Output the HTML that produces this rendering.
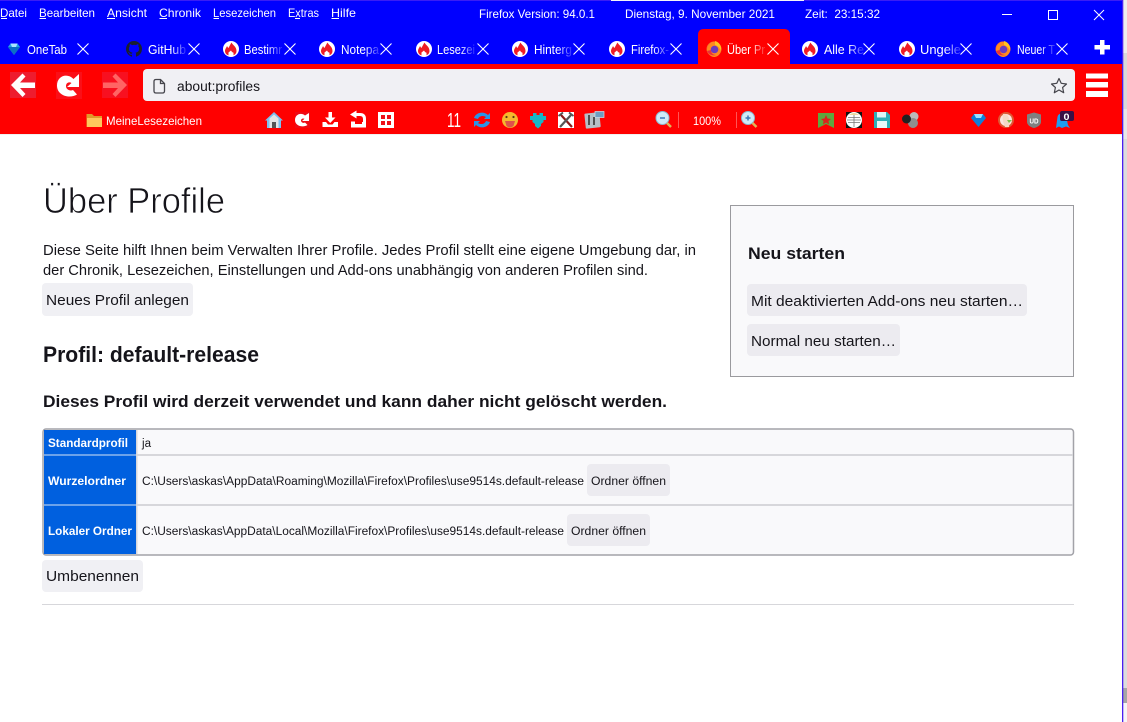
<!DOCTYPE html>
<html lang="de"><head><meta charset="utf-8"><title>Über Profile</title>
<style>
html,body{margin:0;padding:0;background:#fff;width:1127px;height:722px;overflow:hidden}
svg{display:block}
text{font-family:"Liberation Sans",sans-serif;white-space:pre}
.m{fill:#fff;font-size:12px}
.t{font-size:13px}
.c{fill:#15141a;font-size:15px}
.h{fill:#fff;font-size:11.5px;font-weight:bold}
.p{fill:#15141a;font-size:11.5px}
.x{stroke:#fff;stroke-width:1.1;fill:none}
</style></head><body>
<svg width="1127" height="722" viewBox="0 0 1127 722" xmlns="http://www.w3.org/2000/svg">
<defs>
<linearGradient id="f"><stop offset=".6" stop-color="#fff"/><stop offset="1" stop-color="#fff" stop-opacity=".15"/></linearGradient>
<g id="fire"><circle r="8" fill="#fff"/><path d="M.5-6.500C1.500-4 5.500-2.500 5.500 2 5.500 5 3 6.500 1 6.500L-1 6.500C-4 6.500-6 4.500-6 2-6 0-4.500-1.500-4-3-3.500-2-3-1.500-2.500-1-1.500-3-.5-5 .5-6.500Z" fill="#ee1c25"/><path d="M-2.500 6.500V3.500L0 1.500 1 3 2.500 3.800V6.500Z" fill="#fff"/></g>
<g id="ff"><circle r="7.500" fill="#f2692c"/><path d="M-7 1C-7-3-4-7 0-7.500 3-8 6-5 7-2 8 3 5 8 0 8-3 8-6 5-7 1Z" fill="#ff8a1f"/><path d="M1-8C5-7 8-3 7 2 6-1 4-3 1-4Z" fill="#ffc21f"/><circle cx=".5" cy=".5" r="3.800" fill="#6a3bc0"/><path d="M-7 2C-5 6-1 7 2 6-1 6-3 4-3 1Z" fill="#e8323c"/></g>
<path id="xx" class="x" d="M-5.500-5.500 5.500 5.500M5.500-5.500-5.500 5.500"/>
</defs>

<rect width="1127" height="722" fill="#fff"/>
<!-- right strip -->
<rect x="1123" y="0" width="4" height="53" fill="#eeeeee"/>
<rect x="1123" y="53" width="4" height="56" fill="#d9d9d9"/>
<rect x="1123" y="109" width="4" height="30" fill="#e8e8e8"/>
<rect x="1123" y="139" width="4" height="549" fill="#dcdcdc"/>
<rect x="1123" y="688" width="4" height="15" fill="#a6a6a6"/>
<rect x="1123" y="703" width="4" height="19" fill="#f6f6f6"/>
<rect x="1122" y="0" width="1.300" height="722" fill="#4a1ff0"/>

<!-- titlebar -->
<rect width="1122" height="64" fill="#0000ff"/>
<rect y="0" width="611" height="1" fill="#3a1cf5"/>
<rect x="611" y="0" width="193" height="1" fill="#f4f4fa"/>
<rect x="804" y="0" width="318" height="1" fill="#3a1cf5"/>
<text class="m" x="0" y="17" textLength="27" lengthAdjust="spacingAndGlyphs">Datei</text>
<text class="m" x="39" y="17" textLength="56" lengthAdjust="spacingAndGlyphs">Bearbeiten</text>
<text class="m" x="107" y="17" textLength="40" lengthAdjust="spacingAndGlyphs">Ansicht</text>
<text class="m" x="159" y="17" textLength="42" lengthAdjust="spacingAndGlyphs">Chronik</text>
<text class="m" x="213" y="17" textLength="63" lengthAdjust="spacingAndGlyphs">Lesezeichen</text>
<text class="m" x="288" y="17" textLength="31" lengthAdjust="spacingAndGlyphs">Extras</text>
<text class="m" x="331" y="17" textLength="25" lengthAdjust="spacingAndGlyphs">Hilfe</text>
<path d="M1 18.500H7M39.500 18.500H46M107 18.500H115M159.500 18.500H167M213.500 18.500H219M295 18.500H300M331.500 18.500H339" stroke="#fff" stroke-width="1"/>
<text class="m" x="479" y="18" textLength="116" lengthAdjust="spacingAndGlyphs">Firefox Version: 94.0.1</text>
<text class="m" x="625" y="18" textLength="150" lengthAdjust="spacingAndGlyphs">Dienstag, 9. November 2021</text>
<text class="m" x="805" y="18" textLength="75" lengthAdjust="spacingAndGlyphs">Zeit:  23:15:32</text>
<rect x="1002" y="14" width="10" height="1" fill="#fff"/>
<rect x="1048.500" y="10.500" width="9" height="9" fill="none" stroke="#fff"/>
<path d="M1094 10 1104 20M1104 10 1094 20" stroke="#fff" stroke-width="1"/>

<!-- tabs -->
<path d="M698 64V35Q698 29 704 29H784Q790 29 790 35V64Z" fill="#ff0000"/>
<g>
<path d="M14 55 8 47 10.500 43.500H17.500L20 47Z" fill="#1fa3e8"/><path d="M8 47H20L14 55Z" fill="#0b6fc4"/><path d="M10.500 43.500H17.500L16 47H12Z" fill="#a8e6ff"/>
<text class="t" x="27" y="54" textLength="40" lengthAdjust="spacingAndGlyphs" fill="#fff">OneTab</text>
<use href="#xx" x="83" y="49"/>

<path transform="translate(126 41)" fill="#1b1f2e" d="M8 0C3.58 0 0 3.58 0 8c0 3.54 2.29 6.53 5.47 7.59.4.07.55-.17.55-.38 0-.19-.01-.82-.01-1.49-2.01.37-2.53-.49-2.69-.94-.09-.23-.48-.94-.82-1.13-.28-.15-.68-.52-.01-.53.63-.01 1.08.58 1.23.82.72 1.21 1.87.87 2.33.66.07-.52.28-.87.51-1.07-1.78-.2-3.64-.89-3.64-3.95 0-.87.31-1.59.82-2.15-.08-.2-.36-1.02.08-2.12 0 0 .67-.21 2.2.82.64-.18 1.32-.27 2-.27.68 0 1.36.09 2 .27 1.53-1.04 2.2-.82 2.2-.82.44 1.1.16 1.92.08 2.12.51.56.82 1.27.82 2.15 0 3.07-1.87 3.75-3.65 3.95.29.25.54.73.54 1.48 0 1.07-.01 1.93-.01 2.2 0 .21.15.46.55.38A8.013 8.013 0 0016 8c0-4.42-3.58-8-8-8z"/>
<text class="t" x="148" y="54" textLength="38" lengthAdjust="spacingAndGlyphs" fill="url(#f)">GitHub</text>
<use href="#xx" x="194" y="49"/>

<use href="#fire" x="231" y="49"/>
<text class="t" x="244" y="54" textLength="38" lengthAdjust="spacingAndGlyphs" fill="url(#f)">Bestimr</text>
<use href="#xx" x="290" y="49"/>

<use href="#fire" x="327" y="49"/>
<text class="t" x="341" y="54" textLength="38" lengthAdjust="spacingAndGlyphs" fill="url(#f)">Notepa</text>
<use href="#xx" x="386" y="49"/>

<use href="#fire" x="424" y="49"/>
<text class="t" x="437" y="54" textLength="38" lengthAdjust="spacingAndGlyphs" fill="url(#f)">Lesezei</text>
<use href="#xx" x="483" y="49"/>

<use href="#fire" x="520" y="49"/>
<text class="t" x="534" y="54" textLength="38" lengthAdjust="spacingAndGlyphs" fill="url(#f)">Hinterg</text>
<use href="#xx" x="579" y="49"/>

<use href="#fire" x="617" y="49"/>
<text class="t" x="631" y="54" textLength="38" lengthAdjust="spacingAndGlyphs" fill="url(#f)">Firefox-</text>
<use href="#xx" x="676" y="49"/>

<use href="#ff" x="714" y="49"/>
<text class="t" x="727" y="54" textLength="38" lengthAdjust="spacingAndGlyphs" fill="url(#f)">Über Pr</text>
<use href="#xx" x="773" y="49"/>

<use href="#fire" x="810" y="49"/>
<text class="t" x="824" y="54" textLength="40" lengthAdjust="spacingAndGlyphs" fill="url(#f)">Alle Re</text>
<use href="#xx" x="869" y="49"/>

<use href="#fire" x="907" y="49"/>
<text class="t" x="920" y="54" textLength="41" lengthAdjust="spacingAndGlyphs" fill="url(#f)">Ungele</text>
<use href="#xx" x="966" y="49"/>

<use href="#ff" x="1003" y="49"/>
<text class="t" x="1017" y="54" textLength="38" lengthAdjust="spacingAndGlyphs" fill="url(#f)">Neuer T</text>
<use href="#xx" x="1062" y="49"/>
</g>
<path d="M1100 40H1104.500V45H1110V49.500H1104.500V54.500H1100V49.500H1094.500V45H1100Z" fill="#fff"/>

<!-- nav -->
<rect y="64" width="1122" height="70" fill="#ff0000"/>
<rect x="10" y="72" width="26" height="26" fill="#ee1c2e"/>
<path d="M11 85 22.500 73.500 25.500 76.500 20 82.500H35V88H20L25.500 94 22.500 97Z" fill="#fff"/>
<rect x="56" y="72" width="26" height="27" fill="#fb0f17"/>
<path d="M79 74V87H67L71.500 83C69.500 81.500 66 82.500 66 86 66 89.500 70 91.500 73 90L77 94.500C70 99 57 96 57 85.500 57 76 67 72.500 73.500 79Z" fill="#fff"/>
<rect x="102" y="72" width="26" height="26" fill="#f81020"/>
<path d="M127 85 115.500 73.500 112.500 76.500 118 82.500H103V88H118L112.500 94 115.500 97Z" fill="#ff6464"/>

<rect x="143" y="69" width="932" height="32" rx="4" fill="#f0f0f4"/>
<path d="M154 81.500Q154 79.500 156 79.500H160.500L164.500 83.500V91Q164.500 93 162.500 93H156Q154 93 154 91Z" fill="none" stroke="#45454c" stroke-width="1.300"/>
<path d="M160.500 79.500V83.500H164.500" fill="none" stroke="#45454c" stroke-width="1.300"/>
<text x="177" y="91" font-size="13.500" textLength="83" lengthAdjust="spacingAndGlyphs" fill="#15141a">about:profiles</text>
<path d="M1059 78.500 1061.200 83.300 1066.500 84 1062.600 87.500 1063.700 92.700 1059 90 1054.300 92.700 1055.400 87.500 1051.500 84 1056.800 83.300Z" fill="none" stroke="#45454c" stroke-width="1.200" stroke-linejoin="round"/>
<path d="M1086 73.500H1108V78.500H1086ZM1086 82H1108V87.500H1086ZM1086 91H1108V97H1086Z" fill="#fff"/>

<!-- bookmarks toolbar -->
<path d="M86.500 114H92L94 116H102V127H86.500Z" fill="#e09a2a"/><path d="M87 118H102V127H87Z" fill="#ffc65c"/>
<text x="106" y="125" font-size="12" textLength="96" lengthAdjust="spacingAndGlyphs" fill="#fff">MeineLesezeichen</text>

<path d="M274 112 283 120.500H281V128H267V120.500H265Z" fill="#7cc0ef"/><path d="M269.500 118.500 274 114.500 278.500 118.500V128H269.500Z" fill="#e4e4e4"/><path d="M272 128V122H276V128Z" fill="#555"/>
<rect x="295" y="112" width="15" height="16" fill="#ef0a14"/>
<path d="M309 113V121H302L304.500 118.800C303 118 301 118.800 301 120.500 301 122.500 303.500 123.500 305 122.500L307.500 125C303 128 295 126 295 120 295 114.500 301 112 305 115.500Z" fill="#fff"/>
<path d="M328.500 112H332V117.500H335.500L330.200 123 325 117.500H328.500ZM322.500 122H326L328 124.500H332.500L334.500 122H338V127H322.500Z" fill="#fff"/>
<path d="M350 114.500 356.500 110.500V118.500Z" fill="#fff"/>
<path d="M355 114.500H360Q364.500 114.500 364.500 119V123" fill="none" stroke="#fff" stroke-width="3"/>
<path d="M351 121.500H355V124H362V122H366V127.500H351Z" fill="#fff"/>
<rect x="378" y="112" width="16" height="16" fill="#fff"/>
<path d="M381 115H385V119H381ZM387 115H391V119H387ZM381 121H385V125H381ZM387 121H391V125H387Z" fill="#ee0f18"/>
<text x="447" y="127" font-size="20" textLength="14" lengthAdjust="spacingAndGlyphs" fill="#fff">11</text>
<path d="M474 118C476 112 484 111 488 115L490 113V119H484L486 117C483 115 479 116 478 119ZM490 122C488 128 480 129 476 125L474 127V121H480L478 123C481 125 485 124 486 121Z" fill="#2a93e6"/>
<circle cx="510" cy="120" r="8" fill="#f5b82e"/><circle cx="506.500" cy="117" r="1.100" fill="#5a3a10"/><circle cx="513.500" cy="117" r="1.100" fill="#5a3a10"/><path d="M505 121H515L513.500 126Q510 129 506.500 126Z" fill="#e0504a"/>
<path d="M533 113H536.500V115H539.500V113H543V116H546V120H543.500V122L541 124V126L538 128.500 535 126V124L532.500 122V120H530V116H533Z" fill="#18b6c6"/>
<rect x="558" y="112" width="16" height="16" fill="#fff"/>
<path d="M561 115 572 127" stroke="#8a1c1c" stroke-width="2.200"/><path d="M571 115 560 127" stroke="#555" stroke-width="2.200"/><path d="M558.500 116 563 112.500M573.500 116 569 112.500" stroke="#555" stroke-width="1.800"/>
<rect x="585" y="113" width="15" height="15" rx="1" fill="#b6bfc6" transform="rotate(-6 592 120)"/><rect x="595" y="111.500" width="9" height="6" fill="#6f9dc0" stroke="#cfe0ea" stroke-width=".7"/><path d="M589 115V125M594 117V125" stroke="#444" stroke-width="1.800"/>

<circle cx="662.500" cy="118" r="6.500" fill="#cfeaf7" stroke="#8cb8cf"/><path d="M660 118H665" stroke="#3a78b8" stroke-width="1.500"/><path d="M667 123 671 127" stroke="#e0b45a" stroke-width="2.500"/>
<rect x="678" y="112" width="1" height="16" fill="#f55"/>
<text x="693" y="125" font-size="12" textLength="28" lengthAdjust="spacingAndGlyphs" fill="#fff">100%</text>
<rect x="736" y="112" width="1" height="16" fill="#f55"/>
<circle cx="748" cy="118" r="6.500" fill="#cfeaf7" stroke="#8cb8cf"/><path d="M745.500 118H750.500M748 115.500V120.500" stroke="#3a78b8" stroke-width="1.500"/><path d="M752.500 123 756.500 127" stroke="#e0b45a" stroke-width="2.500"/>

<path d="M818 113H834V128L826 124 818 128Z" fill="#5ea83e"/><path d="M826 115 827.500 118.500 831 119 828.500 121 829 124.500 826 122.500 823 124.500 823.500 121 821 119 824.500 118.500Z" fill="#e0201c"/>
<rect x="846" y="112" width="16" height="16" fill="#111"/><circle cx="854" cy="120" r="8" fill="#fff"/><path d="M848 117.500H860M847 120H861M848 122.500H860M854 113V127" stroke="#777" stroke-width=".8"/><path d="M849 115Q854 111 859 115Z" fill="#ead9a0"/>
<path d="M874 112H887L890 115V128H874Z" fill="#2eb0b8"/><rect x="877" y="112" width="9" height="5.500" fill="#dff5f5"/><rect x="877" y="121" width="10" height="7" fill="#eaf8f8"/>
<circle cx="914" cy="116.500" r="4.500" fill="#bbb"/><circle cx="913" cy="123" r="5" fill="#8e8e8e"/><circle cx="906.500" cy="119" r="4.500" fill="#222"/>

<path d="M978.500 127 971 118 974 114H983L986 118Z" fill="#0e7fd8"/><path d="M974 114H983L981 118H976Z" fill="#9fe2ff"/>
<circle cx="1006" cy="120" r="8" fill="#de5833"/><circle cx="1006" cy="120" r="6" fill="#fff" opacity=".85"/><path d="M1003 114C1008 113 1010 117 1009 127H1005C1003 122 1002 118 1003 114Z" fill="#f4d9c6"/><path d="M1007 120H1012L1009 123Z" fill="#7cc04a"/>
<path d="M1034 112.500 1041 114.500V122C1041 125 1037 127.500 1034 128 1031 127.500 1027 125 1027 122V114.500Z" fill="#808080"/>
<text x="1029.500" y="123.500" font-size="7.500" font-weight="bold" textLength="9" lengthAdjust="spacingAndGlyphs" fill="#fff">UD</text>
<path d="M1056 128 1057.500 117C1058 113 1064 112 1066 116L1068 125 1070 128 1066 126.500 1062 128 1059 126.500Z" fill="#1e9ef0"/>
<rect x="1060" y="111" width="14" height="10" rx="2" fill="#3b1045"/>
<text x="1063.500" y="120" font-size="9.500" font-weight="bold" textLength="6" lengthAdjust="spacingAndGlyphs" fill="#fff">0</text>

<rect y="134" width="1122" height="1" fill="#f0f0f0"/>

<!-- content -->
<text x="43" y="213" font-size="36" textLength="182" lengthAdjust="spacingAndGlyphs" fill="#15141a" stroke="#fff" stroke-width=".7">Über Profile</text>
<text class="c" x="43" y="255" textLength="653" lengthAdjust="spacingAndGlyphs">Diese Seite hilft Ihnen beim Verwalten Ihrer Profile. Jedes Profil stellt eine eigene Umgebung dar, in</text>
<text class="c" x="43" y="275" textLength="605" lengthAdjust="spacingAndGlyphs">der Chronik, Lesezeichen, Einstellungen und Add-ons unabhängig von anderen Profilen sind.</text>
<rect x="42" y="283" width="151" height="33" rx="4" fill="#f0f0f4"/>
<text class="c" x="46" y="305" textLength="143" lengthAdjust="spacingAndGlyphs">Neues Profil anlegen</text>
<text x="43" y="362" font-size="22" font-weight="bold" textLength="216" lengthAdjust="spacingAndGlyphs" fill="#15141a">Profil: default-release</text>
<text x="43" y="407" font-size="17" font-weight="bold" textLength="624" lengthAdjust="spacingAndGlyphs" fill="#15141a">Dieses Profil wird derzeit verwendet und kann daher nicht gelöscht werden.</text>

<!-- sidebar -->
<rect x="730.500" y="205.500" width="343" height="171" fill="#f9f9fb" stroke="#9a9a9e"/>
<text x="748" y="259" font-size="17" font-weight="bold" textLength="97" lengthAdjust="spacingAndGlyphs" fill="#15141a">Neu starten</text>
<rect x="747" y="284" width="280" height="32" rx="4" fill="#ecebf0"/>
<text class="c" x="751" y="306" textLength="272" lengthAdjust="spacingAndGlyphs">Mit deaktivierten Add-ons neu starten…</text>
<rect x="747" y="324" width="153" height="32" rx="4" fill="#ecebf0"/>
<text class="c" x="751" y="346" textLength="145" lengthAdjust="spacingAndGlyphs">Normal neu starten…</text>

<!-- table -->
<rect x="43" y="429" width="1030.500" height="126" rx="3" fill="#f9f9fb" stroke="#a2a2a8" stroke-width="1.500"/>
<rect x="44" y="430" width="92" height="124" fill="#0060df"/>
<rect x="136" y="430" width="1.500" height="124" fill="#d7d7db"/>
<rect x="44" y="454" width="92" height="2" fill="#6ba2ea"/>
<rect x="44" y="504" width="92" height="2" fill="#6ba2ea"/>
<rect x="137" y="454" width="936" height="2" fill="#d7d7db"/>
<rect x="137" y="504" width="936" height="2" fill="#d7d7db"/>
<text class="h" x="48" y="447" textLength="80" lengthAdjust="spacingAndGlyphs">Standardprofil</text>
<text class="h" x="48" y="485" textLength="78" lengthAdjust="spacingAndGlyphs">Wurzelordner</text>
<text class="h" x="48" y="535" textLength="84" lengthAdjust="spacingAndGlyphs">Lokaler Ordner</text>
<text class="p" x="142" y="447" textLength="9" lengthAdjust="spacingAndGlyphs">ja</text>
<text class="p" x="142" y="485" textLength="442" lengthAdjust="spacingAndGlyphs">C:\Users\askas\AppData\Roaming\Mozilla\Firefox\Profiles\use9514s.default-release</text>
<text class="p" x="142" y="535" textLength="422" lengthAdjust="spacingAndGlyphs">C:\Users\askas\AppData\Local\Mozilla\Firefox\Profiles\use9514s.default-release</text>
<rect x="587" y="464" width="83" height="32" rx="4" fill="#ecebf0"/>
<text class="p" x="591" y="485" textLength="75" lengthAdjust="spacingAndGlyphs">Ordner öffnen</text>
<rect x="567" y="514" width="83" height="32" rx="4" fill="#ecebf0"/>
<text class="p" x="571" y="535" textLength="75" lengthAdjust="spacingAndGlyphs">Ordner öffnen</text>
<rect x="42" y="560" width="101" height="32" rx="4" fill="#f0f0f4"/>
<text class="c" x="46" y="581" textLength="93" lengthAdjust="spacingAndGlyphs">Umbenennen</text>
<rect x="42" y="604" width="1032" height="1" fill="#d7d7db"/>
</svg>
</body></html>
